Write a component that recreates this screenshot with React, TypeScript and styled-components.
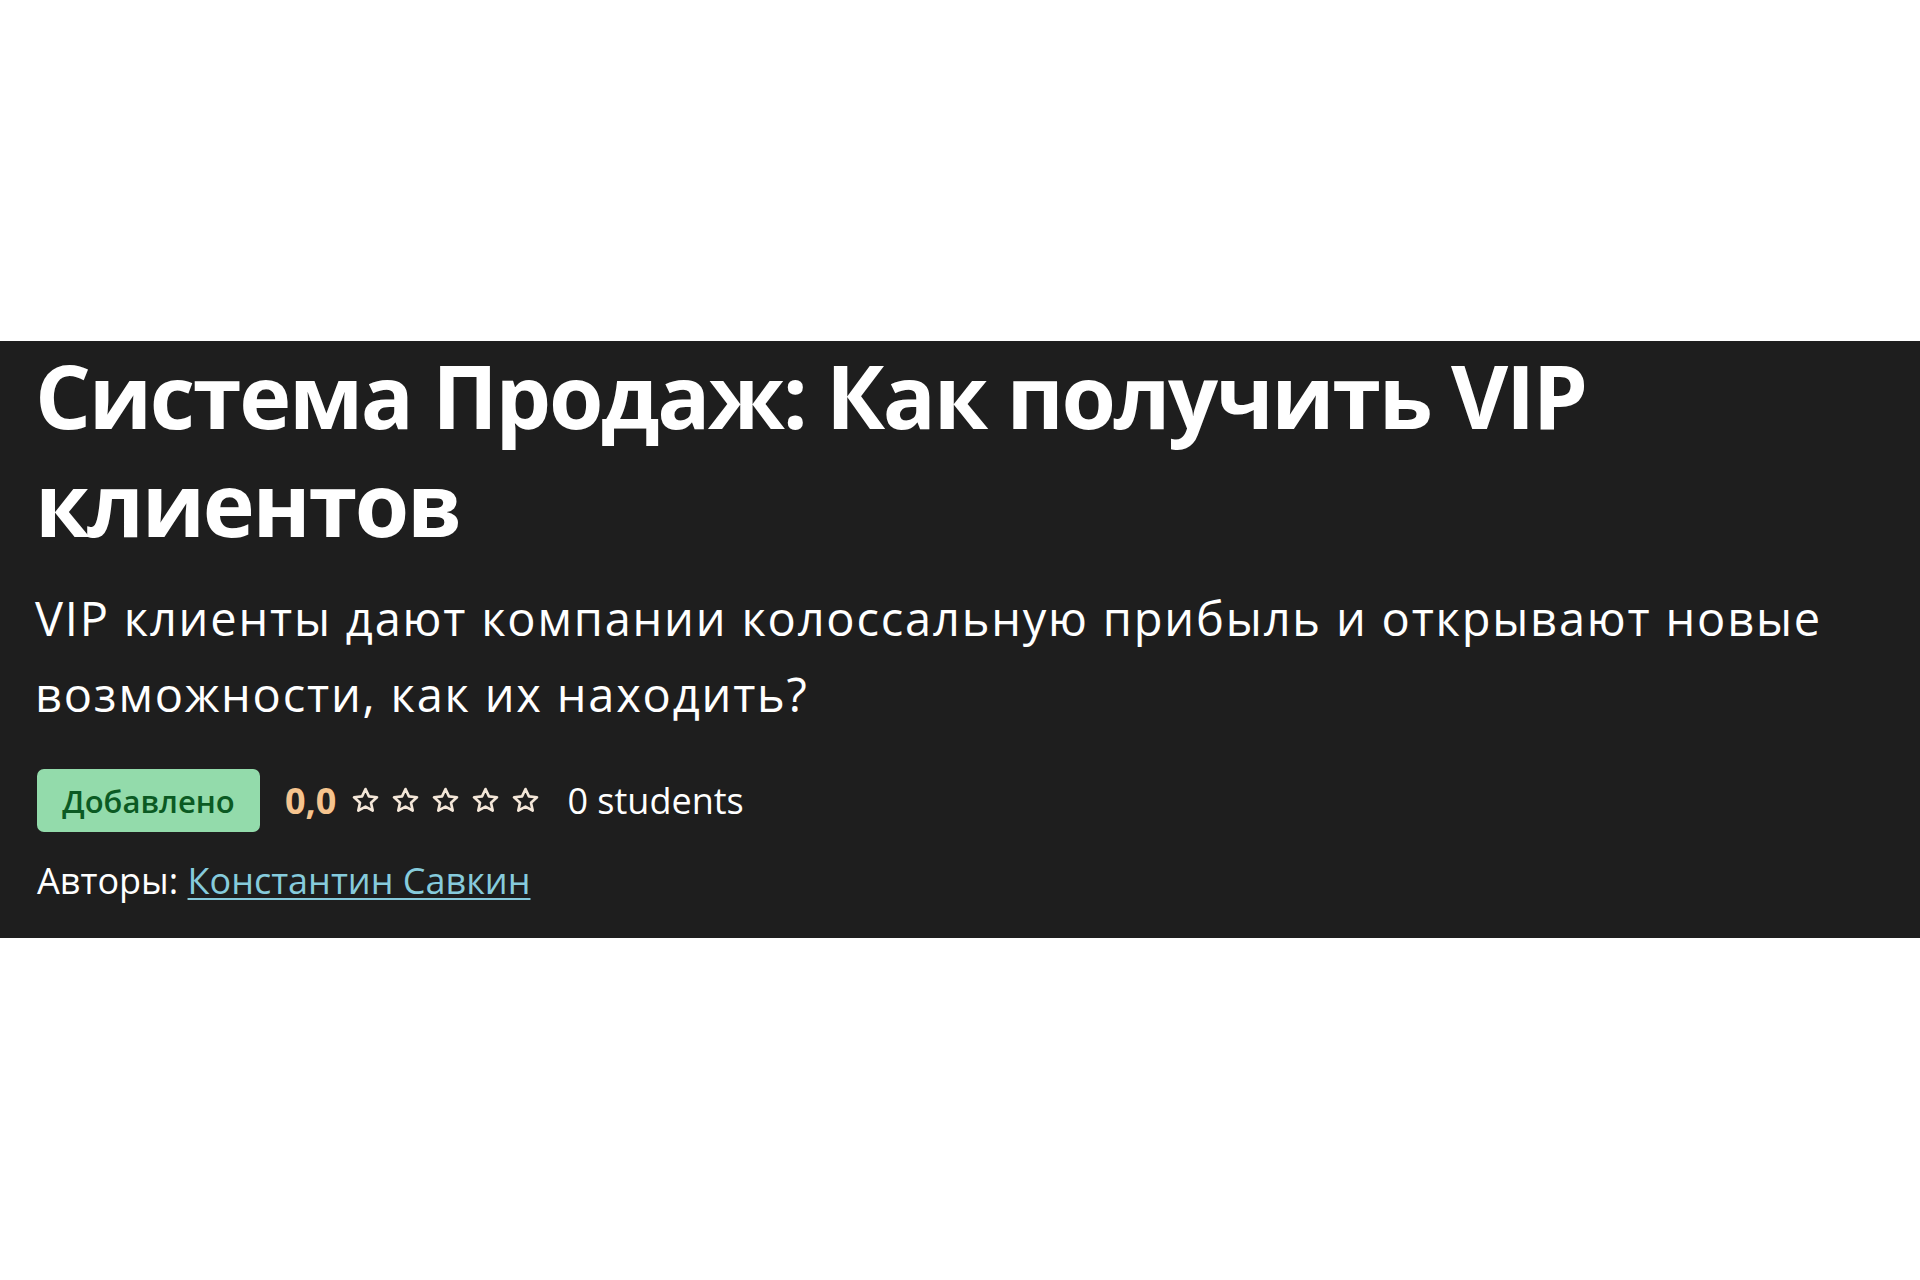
import React from "react";
import styled, { createGlobalStyle } from "styled-components";

const Global = createGlobalStyle`
  html, body { margin: 0; padding: 0; background: #ffffff; }
  body { font-family: "Open Sans", "Noto Sans", sans-serif; }
`;

const Page = styled.div`
  padding-top: 341px;
  min-height: 1280px;
  box-sizing: border-box;
`;

const Band = styled.section`
  background: #1e1e1e;
  color: #ffffff;
  padding: 0 40px 33px 35px;
  display: flex;
  flex-direction: column;
`;

const Title = styled.h1`
  margin: 0;
  font-family: "Open Sans", "Noto Sans", sans-serif;
  font-weight: 700;
  font-size: 88px;
  line-height: 108px;
  letter-spacing: -2.3px;
  color: #ffffff;
  max-width: 1600px;
`;

const Subtitle = styled.p`
  margin: 23px 0 0;
  font-size: 47px;
  line-height: 76px;
  font-weight: 400;
  letter-spacing: 1.8px;
  color: #ffffff;
  max-width: 1840px;
`;

const MetaRow = styled.div`
  margin-top: 37px;
  height: 63px;
  display: flex;
  align-items: center;
`;

const Badge = styled.span`
  display: inline-flex;
  align-items: center;
  justify-content: center;
  width: 223px;
  height: 63px;
  margin-left: 2px;
  box-sizing: border-box;
  border-radius: 7px;
  background: #93dbab;
  color: #0b5a23;
  font-size: 31px;
  font-weight: 600;
`;

const Rating = styled.span`
  margin-left: 25px;
  font-size: 36px;
  font-weight: 700;
  color: #f6c48e;
`;

const Stars = styled.span`
  display: inline-flex;
  gap: 11px;
  margin-left: 15px;
`;

const Students = styled.span`
  margin-left: 27px;
  font-size: 36px;
  font-weight: 500;
  color: #ffffff;
`;

const Authors = styled.div`
  margin-top: 25px;
  margin-left: 2px;
  font-size: 36px;
  line-height: 48px;
  color: #ffffff;
`;

const AuthorLink = styled.a`
  color: #86cbdc;
  text-decoration: underline;
  text-underline-offset: 4px;
  text-decoration-thickness: 2px;
`;

const Star = () => (
  <svg width="29" height="29" viewBox="0 0 24 24" aria-hidden="true">
    <path
      d="M12 2.5l2.85 6.1 6.65.75-4.95 4.5 1.4 6.55L12 17.05 6.05 20.4l1.4-6.55L2.5 9.35l6.65-.75z"
      fill="none"
      stroke="#f3e6d8"
      strokeWidth="2.2"
      strokeLinejoin="round"
    />
  </svg>
);

export default function App() {
  return (
    <Page>
      <Global />
      <Band>
        <Title>Система Продаж: Как получить VIP клиентов</Title>
        <Subtitle>
          VIP клиенты дают компании колоссальную прибыль и открывают новые
          возможности, как их находить?
        </Subtitle>
        <MetaRow>
          <Badge>Добавлено</Badge>
          <Rating>0,0</Rating>
          <Stars>
            <Star />
            <Star />
            <Star />
            <Star />
            <Star />
          </Stars>
          <Students>0 students</Students>
        </MetaRow>
        <Authors>
          Авторы: <AuthorLink href="#">Константин Савкин</AuthorLink>
        </Authors>
      </Band>
    </Page>
  );
}
